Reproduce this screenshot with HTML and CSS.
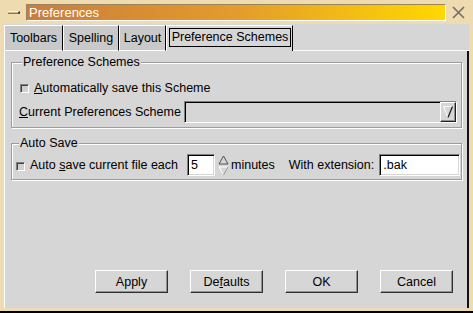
FILE: index.html
```html
<!DOCTYPE html>
<html lang="en">
<head>
    <meta charset="UTF-8">
    <title>Preferences</title>
    <link rel="stylesheet" href="styles.css">
</head>
<body>

    <div class="window">
        <!-- Barre de titre -->
        <div class="titlebar">
            <span class="menu-btn"></span>
            <div class="title">Preferences</div>
            <svg class="close" width="13" height="13" viewBox="0 0 13 13">
                <path d="M1 1 L12 12 M12 1 L1 12" stroke="#6e6e6e" stroke-width="1.6" fill="none"/>
            </svg>
        </div>

        <div class="frame">
            <!-- Onglets -->
            <div class="tabs">
                <div class="tab tab-toolbars">Toolbars</div>
                <div class="tab tab-spelling">Spelling</div>
                <div class="tab tab-layout">Layout</div>
                <div class="tab active"><span class="focus">Preference Schemes</span></div>
                <div class="tab-fill"></div>
            </div>

            <div class="panel">
                <fieldset class="group group-schemes">
                    <legend>Preference Schemes</legend>
                    <div class="row row-check">
                        <span class="check"></span>
                        <span><u>A</u>utomatically save this Scheme</span>
                    </div>
                    <div class="row row-combo">
                        <span><u>C</u>urrent Preferences Scheme</span>
                        <div class="combo">
                            <span class="combo-btn">
                                <svg width="10" height="14" viewBox="0 0 10 14">
                                    <path d="M0.5 1.5 L9.5 1.5" stroke="#fff" stroke-width="1" fill="none"/>
                                    <path d="M0.5 1.5 L5 12.5" stroke="#fff" stroke-width="1" fill="none"/>
                                    <path d="M9.5 1.5 L5 12.5" stroke="#202020" stroke-width="1.3" fill="none"/>
                                </svg>
                            </span>
                        </div>
                    </div>
                </fieldset>

                <fieldset class="group group-autosave">
                    <legend>Auto Save</legend>
                    <div class="row row-autosave">
                        <span class="check"></span>
                        <span class="autosave-label">Auto <u>s</u>ave current file each</span>
                        <span class="field field-num">5</span>
                        <svg class="spin" width="11" height="21" viewBox="0 0 11 21">
                            <path d="M5.5 1 L10 9 L1 9 Z" stroke="#505050" stroke-width="1" fill="none"/>
                            <path d="M1 12 L10 12 L5.5 20 Z" stroke="#ffffff" stroke-width="1" fill="none"/>
                            <path d="M10 12 L5.5 20" stroke="#909090" stroke-width="1" fill="none"/>
                        </svg>
                        <span class="minutes">minutes</span>
                        <span class="ext-label">With extension:</span>
                        <span class="field field-ext">.bak</span>
                    </div>
                </fieldset>

                <!-- Boutons du bas -->
                <div class="buttons">
                    <button class="btn">Apply</button>
                    <button class="btn">De<u>f</u>aults</button>
                    <button class="btn">OK</button>
                    <button class="btn">Cancel</button>
                </div>
            </div>
        </div>
    </div>

</body>
</html>
```

FILE: styles.css
```css
body {
    margin: 0;
    font-family: "Liberation Sans", Arial, sans-serif;
    font-size: 12.5px;
    color: #000;
}

.window {
    width: 473px;
    height: 313px;
    box-sizing: border-box;
    background-color: #efdbb0;
    border-bottom: 2px solid #000;
    display: flex;
    flex-direction: column;
}

/* Barre de titre */
.titlebar {
    height: 24px;
    flex-shrink: 0;
    display: flex;
    align-items: center;
}

.menu-btn {
    width: 12px;
    height: 3px;
    margin-left: 8px;
    box-sizing: border-box;
    background-color: #c9b68e;
    border-top: 1px solid #fff8e6;
    border-bottom: 1px solid #8a7858;
    border-right: 2px solid #4a3a20;
}

.title {
    flex: 1;
    margin-left: 6px;
    height: 17px;
    box-sizing: border-box;
    border: 1px solid;
    border-color: #9a8460 #fff #fff #9a8460;
    background: linear-gradient(to right, #c97d3c, #e39c2c 50%, #ffd800);
    color: #fff;
    font-size: 13px;
    line-height: 15px;
    padding-left: 2px;
}

.close {
    margin: 0 8px 0 6px;
}

/* Cadre principal */
.frame {
    flex: 1;
    margin: 0 4px 3px 4px;
    background-color: #d6d6d6;
    display: flex;
    flex-direction: column;
}

.tabs {
    display: flex;
    padding-top: 1px;
}

.tab {
    height: 26px;
    box-sizing: border-box;
    background-color: #c9c9c9;
    border-top: 1px solid #fff;
    border-left: 1px solid #fff;
    border-bottom: 1px solid #fff;
    border-right: 1px solid #000;
    display: flex;
    align-items: center;
    justify-content: center;
}

.tab-toolbars { width: 59px; }
.tab-spelling { width: 56px; }
.tab-layout { width: 47px; }

.tab.active {
    width: 127px;
    background-color: #d6d6d6;
    border-bottom: none;
    align-items: flex-start;
    justify-content: flex-start;
}

.tab.active .focus {
    margin: 2px 0 0 2px;
    width: 122px;
    height: 19px;
    box-sizing: border-box;
    border: 1px solid #000;
    line-height: 17px;
    text-align: center;
}

.tab-fill {
    flex: 1;
    border-bottom: 1px solid #fff;
}

.panel {
    flex: 1;
    border-left: 1px solid #fff;
    border-right: 2px solid #111;
    padding: 4px 0 15px 6px;
    display: flex;
    flex-direction: column;
}

/* Groupes */
.group {
    margin: 0;
    width: 451px;
    box-sizing: border-box;
    border: 1px solid #9c9c9c;
    box-shadow: inset 1px 1px 0 #fff, 1px 1px 0 #fff;
    padding: 0 0 4px 7px;
}

.group legend {
    padding: 0 1px;
    margin-left: 3px;
    line-height: 14px;
    background-color: #d6d6d6;
}

.group-autosave {
    margin-top: 8px;
    padding: 0 1px 3px 4px;
}

.row {
    display: flex;
    align-items: center;
}

.row-check {
    height: 18px;
    margin-top: 10px;
    padding-left: 1px;
}

.row-combo {
    margin-top: 4px;
    padding-right: 4px;
    gap: 3px;
}

.row-autosave {
    margin-top: 4px;
}

.check {
    width: 9px;
    height: 9px;
    box-sizing: border-box;
    border: 1px solid;
    border-color: #808080 #fff #fff #808080;
    box-shadow: inset 1px 1px 0 #404040;
    background-color: #d0d0d0;
    margin-right: 5px;
}

.row-autosave .check {
    margin-top: 2px;
}

.combo {
    flex: 1;
    height: 22px;
    box-sizing: border-box;
    border: 1px solid;
    border-color: #808080 #fff #fff #808080;
    box-shadow: inset 1px 1px 0 #000;
    display: flex;
    justify-content: flex-end;
}

.combo-btn {
    width: 16px;
    height: 20px;
    box-sizing: border-box;
    border: 1px solid;
    border-color: #fff #202020 #202020 #fff;
    box-shadow: inset -1px -1px 0 #909090;
    display: flex;
    align-items: center;
    justify-content: center;
}

.field {
    height: 22px;
    box-sizing: border-box;
    border: 1px solid;
    border-color: #808080 #fff #fff #808080;
    box-shadow: inset 1px 1px 0 #000, inset -1px -1px 0 #d6d6d6;
    background-color: #fff;
    line-height: 20px;
    padding-left: 3px;
}

.field-num {
    width: 28px;
    margin-left: 9px;
}

.spin {
    margin-left: 3px;
}

.minutes {
    margin-left: 2px;
}

.ext-label {
    margin-left: 14px;
}

.field-ext {
    flex: 1;
    margin-left: 5px;
}

/* Boutons */
.buttons {
    margin-top: auto;
    display: flex;
    justify-content: flex-end;
    gap: 22px;
    padding-right: 14px;
}

.btn {
    width: 73px;
    height: 23px;
    box-sizing: border-box;
    border: 1px solid;
    border-color: #fff #303030 #303030 #fff;
    box-shadow: inset -1px -1px 0 #909090;
    background-color: #d6d6d6;
    font-family: inherit;
    font-size: 12.5px;
    color: #000;
    padding: 0;
}
```
